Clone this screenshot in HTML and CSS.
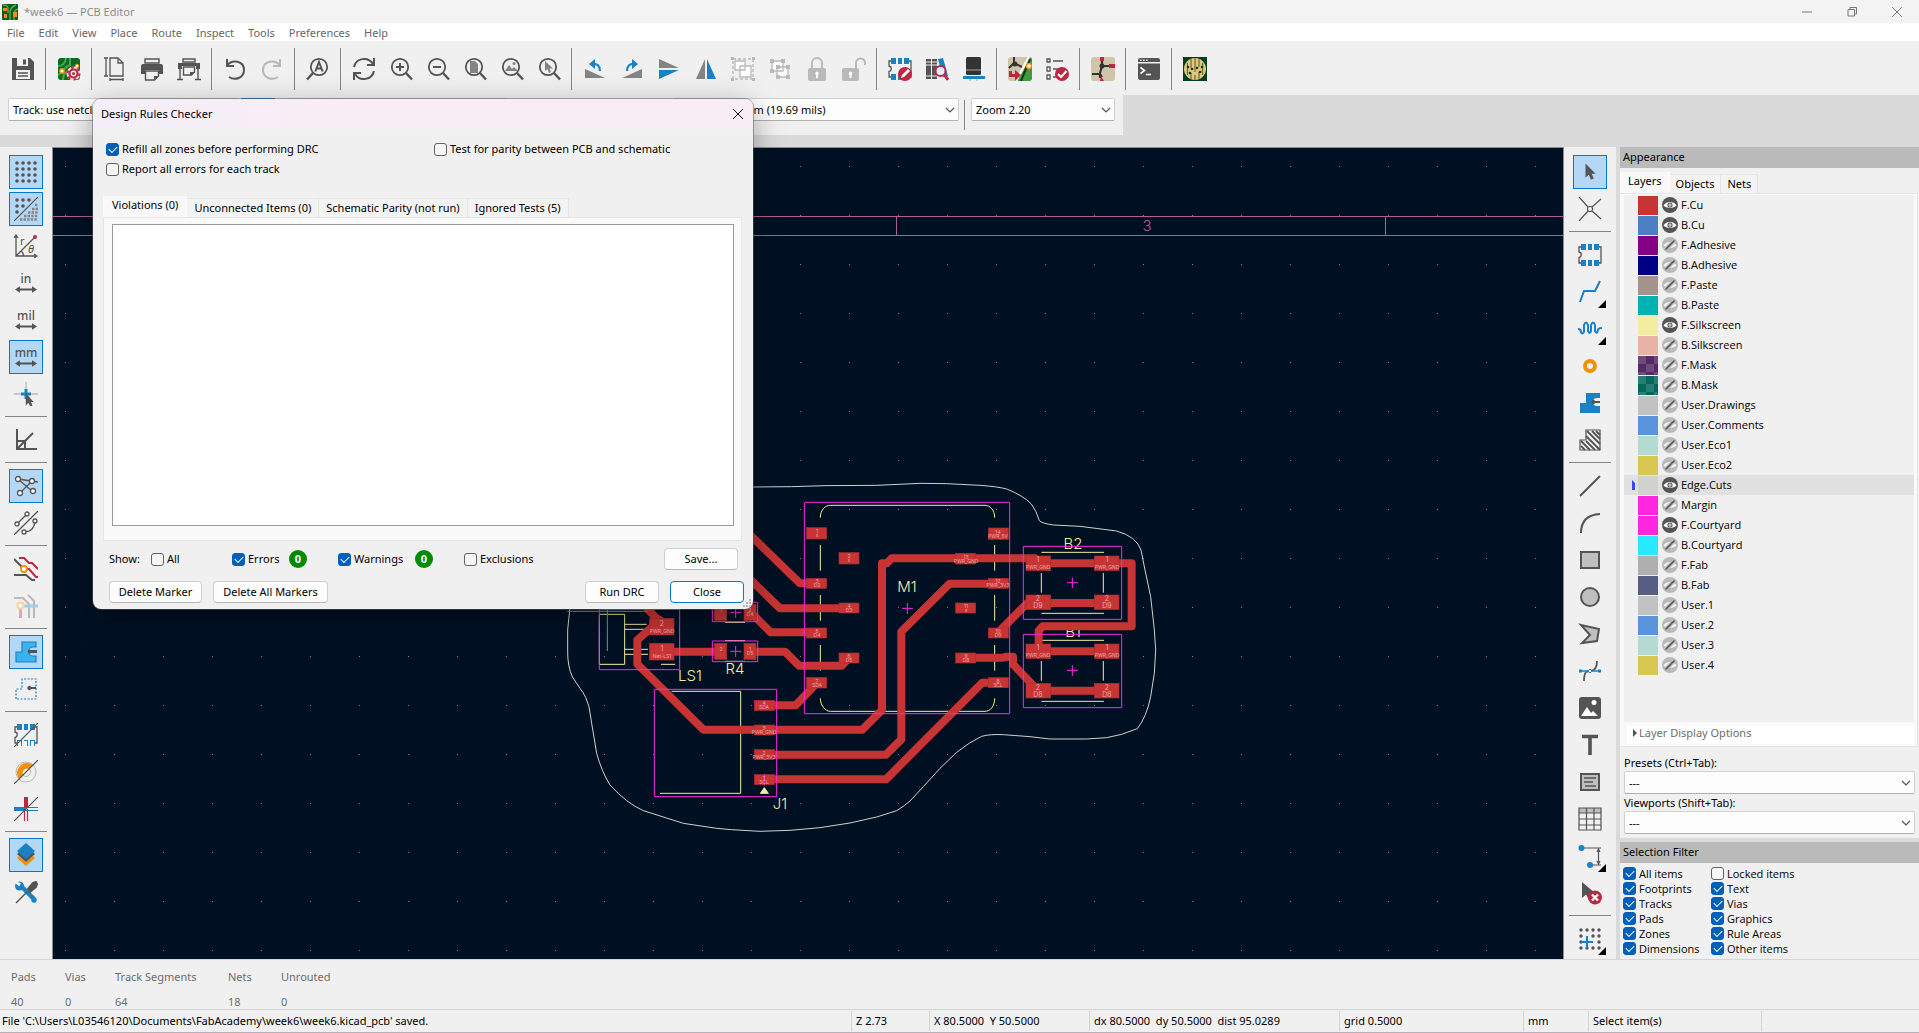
FILE: index.html
```
<!DOCTYPE html>
<html lang="en">
<head>
    <meta charset="UTF-8">
    <meta name="viewport" content="width=device-width, initial-scale=1.0">
    <title>*week6 — PCB Editor</title>
    <link rel="stylesheet" href="styles.css">
</head>
<body>
<!-- Shared symbols -->
<svg class="symbols" aria-hidden="true">
    <symbol id="i-chevron" viewBox="0 0 10 10"><path d="M1 3l4 4 4-4" fill="none" stroke="#555" stroke-width="1.2"/></symbol>
    <symbol id="i-lens" viewBox="0 0 24 24"><g fill="none" stroke="#545454" stroke-width="1.8"><circle cx="11" cy="10" r="8.2"/><path d="M17 16l6 6.500" stroke-width="2.400"/></g></symbol>
    <symbol id="i-arrow" viewBox="0 0 24 24"><path d="M7.500 3.500v14l3.300-2.800 2.200 5 2.800-1.200-2.200-4.800h4z" fill="#545454"/></symbol>
    <symbol id="i-width" viewBox="0 0 24 24"><path d="M1 18.500l5-3.200v2.200h12v-2.200l5 3.200-5 3.200v-2.200H6v2.200z" fill="#545454"/></symbol>
    <symbol id="i-eye" viewBox="0 0 16 16"><circle cx="8" cy="8" r="8" fill="#545454"/><path d="M1.500 8.300C4 3.800 12 3.800 14.500 8.300 12 12 4 12 1.500 8.300z" fill="#fff"/><circle cx="8" cy="8" r="2.600" fill="#545454"/><circle cx="8" cy="8" r="1.500" fill="#fff"/><circle cx="8" cy="8" r=".7" fill="#545454"/></symbol>
    <symbol id="i-hidden" viewBox="0 0 16 16"><circle cx="8" cy="8" r="8" fill="#b9b9b9"/><path d="M1.500 8.300C4 3.800 12 3.800 14.500 8.300 12 12 4 12 1.500 8.300z" fill="#f5f5f5"/><path d="M3.500 12.500l9-9" stroke="#b9b9b9" stroke-width="4"/><path d="M3.500 12.500l9-9" stroke="#545454" stroke-width="1.500"/></symbol>
    <symbol id="i-chip" viewBox="0 0 24 24"><path d="M3 4H1v5c3 .5 3 5 0 5.500V20h2M21 4h2v16h-2" fill="none" stroke="#545454" stroke-width="1.300"/><path d="M3 1h5v6H3zM10 1h4v6h-4zM16 1h5v6h-5zM3 17h5v6H3zM10 17h4v6h-4zM16 17h5v6h-5z" fill="#1a81c4"/></symbol>
    <symbol id="i-zone" viewBox="0 0 24 24"><path d="M2 22V12h6V2h14v5h-3a4 4 0 0 0 0 8h3v7z" fill="#1a81c4"/><path d="M22 10h-5a2 2 0 1 0 0 2h5z" fill="#545454"/></symbol>
</svg>

<header class="titlebar">
    <svg class="app-icon" viewBox="0 0 16 16"><rect width="16" height="16" rx="1" fill="#0f5c1c"/><path d="M8 16V9q0-6 6-8M12 16v-5q0-5 4-6M1 1q5 0 5 4v4" fill="none" stroke="#4fae4a" stroke-width="1.500"/><path d="M1 4h4v3H1zM11 8h4v5h-4zM2 10h3v4H2z" fill="#f08c1e"/></svg>
    <span class="title">*week6 — PCB Editor</span>
    <div class="window-buttons">
        <button aria-label="Minimize"><svg viewBox="0 0 12 12"><path d="M1 6h10"/></svg></button>
        <button aria-label="Restore"><svg viewBox="0 0 12 12"><path d="M2 3.500h6.500V10H2zM4 3.500V1.500h6.500V8h-2"/></svg></button>
        <button aria-label="Close"><svg viewBox="0 0 12 12"><path d="M1 1l10 10M11 1L1 11"/></svg></button>
    </div>
</header>

<nav class="menu">
    <a href="#">File</a><a href="#">Edit</a><a href="#">View</a><a href="#">Place</a><a href="#">Route</a><a href="#">Inspect</a><a href="#">Tools</a><a href="#">Preferences</a><a href="#">Help</a>
</nav>

<div class="toolbar">
    <button aria-label="Save"><svg viewBox="0 0 24 24"><path d="M1 1h18l4 4v18H1z" fill="#545454"/><path d="M6 1h11v8H6z" fill="#f0f0f0"/><path d="M12 2.500h3v5h-3z" fill="#545454"/><path d="M5 13h14v9H5z" fill="#f0f0f0"/><path d="M7 16h10M7 19h10" stroke="#545454" stroke-width="1.300"/></svg></button>
    <span class="sep"></span>
    <button aria-label="Board setup"><svg viewBox="0 0 24 24"><rect x="1" y="1" width="22" height="22" rx="3" fill="#0b6b1e"/><path d="M1 9q7 0 8-8M1 18c6-2 5-8 12-10V1M6 23c0-7 3-8 8-10" fill="none" stroke="#49a64d" stroke-width="2"/><circle cx="5" cy="14" r="2.200" fill="#fff" stroke="#f29100" stroke-width="1.400"/><circle cx="20" cy="9" r="1.800" fill="#fff" stroke="#f29100"/><circle cx="16.500" cy="16.500" r="4.500" fill="none" stroke="#f4d8dd" stroke-width="5"/><circle cx="16.500" cy="16.500" r="4" fill="#f0f0f0" stroke="#bf2641" stroke-width="2.200"/><circle cx="16.500" cy="16.500" r="6" fill="none" stroke="#bf2641" stroke-width="2" stroke-dasharray="2.700 3.580"/><circle cx="16.500" cy="16.500" r="1.500" fill="#bf2641"/></svg></button>
    <span class="sep"></span>
    <button aria-label="Page settings"><svg viewBox="0 0 24 24"><g fill="none" stroke="#545454" stroke-width="1.300"><path d="M7 1h8l5 5v13H7z"/><path d="M15 1v5h5"/><path d="M1 1h4M1 19h4M3 1v18M7 21v3M20 21v3M7 22.500h13"/></g></svg></button>
    <button aria-label="Print"><svg viewBox="0 0 24 24"><path d="M5 2h14v4H5z" fill="none" stroke="#545454" stroke-width="1.400"/><path d="M1 9q0-2 2-2h18q2 0 2 2v8h-4v-4H5v4H1z" fill="#545454"/><path d="M5.500 14h13v5l-4 4h-9z" fill="none" stroke="#545454" stroke-width="1.400"/><path d="M14 23v-4h5z" fill="#545454"/></svg></button>
    <button aria-label="Plot"><svg viewBox="0 0 24 24"><path d="M6 2h12v3H6z" fill="none" stroke="#545454" stroke-width="1.400"/><path d="M1 6h22v6h-4V9H5v3H1z" fill="#545454"/><path d="M6.500 10h11v5l-3 3h-8z" fill="none" stroke="#545454" stroke-width="1.400"/><path d="M3 12v10M21 12v10M0 22.500h6M18 22.500h6" stroke="#545454" stroke-width="1.400"/><path d="M13 19v-4h5z" fill="#545454"/></svg></button>
    <span class="sep"></span>
    <button aria-label="Undo"><svg viewBox="0 0 24 24"><path d="M4 2v7h7M4 8.500C9 2 21 3.500 21 13c0 8-9 11-15 7" fill="none" stroke="#545454" stroke-width="2"/></svg></button>
    <button aria-label="Redo"><svg viewBox="0 0 24 24"><path d="M20 2v7h-7M20 8.500C15 2 3 3.500 3 13c0 8 9 11 15 7" fill="none" stroke="#b9b9b9" stroke-width="2"/></svg></button>
    <span class="sep"></span>
    <button aria-label="Find"><svg viewBox="0 0 24 24"><g fill="none" stroke="#545454" stroke-width="1.800"><circle cx="13" cy="10" r="8.200"/><path d="M7 16l-6 6.500" stroke-width="2.400"/><path d="M9.300 14.500l3.700-9.500 3.700 9.500M10.500 11.500h5" stroke-width="2"/></g></svg></button>
    <span class="sep"></span>
    <button aria-label="Refresh"><svg viewBox="0 0 24 24"><path d="M2 10C4 1 16-1 21 7M22 1v7h-7M22 14c-2 9-14 11-19 3M2 23v-7h7" fill="none" stroke="#545454" stroke-width="2"/></svg></button>
    <button aria-label="Zoom in"><svg viewBox="0 0 24 24"><use href="#i-lens"/><path d="M11 6v8M7 10h8" stroke="#545454" stroke-width="2"/></svg></button>
    <button aria-label="Zoom out"><svg viewBox="0 0 24 24"><use href="#i-lens"/><path d="M7 10h8" stroke="#545454" stroke-width="2"/></svg></button>
    <button aria-label="Zoom to fit"><svg viewBox="0 0 24 24"><use href="#i-lens"/><path d="M7 4h5l3 3v9H7z" fill="#848484"/></svg></button>
    <button aria-label="Zoom to objects"><svg viewBox="0 0 24 24"><use href="#i-lens"/><path d="M5 14l4-6 3 4 2-2 4 4z" fill="#848484"/><circle cx="14" cy="6.500" r="1.500" fill="#848484"/></svg></button>
    <button aria-label="Zoom to selection"><svg viewBox="0 0 24 24"><use href="#i-lens"/><path d="M8 4v10l2.400-2 1.600 4 2-1-1.600-3.500H16z" fill="#848484"/></svg></button>
    <span class="sep"></span>
    <button aria-label="Rotate counterclockwise"><svg viewBox="0 0 24 24"><path d="M2 12v9h20z" fill="#848484"/><path d="M9 7q8-1 8 7" fill="none" stroke="#1a81c4" stroke-width="2.200"/><path d="M12 2L6 7l6 5z" fill="#1a81c4"/></svg></button>
    <button aria-label="Rotate clockwise"><svg viewBox="0 0 24 24"><path d="M22 12v9H2z" fill="#848484"/><path d="M15 7q-8-1-8 7" fill="none" stroke="#1a81c4" stroke-width="2.200"/><path d="M12 2l6 5-6 5z" fill="#1a81c4"/></svg></button>
    <button aria-label="Flip vertically"><svg viewBox="0 0 24 24"><path d="M2 2l20 9H2z" fill="#848484"/><path d="M2 22l20-9H2z" fill="#1a81c4"/></svg></button>
    <button aria-label="Flip horizontally"><svg viewBox="0 0 24 24"><path d="M2 22L11 2v20z" fill="#848484"/><path d="M22 22L13 2v20z" fill="#1a81c4"/></svg></button>
    <button aria-label="Group"><svg viewBox="0 0 24 24"><path d="M2 2h20v20H2z" fill="none" stroke="#b9b9b9" stroke-width="1.400" stroke-dasharray="3 2"/><path d="M0 0h3v3H0zM21 0h3v3h-3zM0 21h3v3H0zM21 21h3v3h-3z" fill="#b9b9b9"/><path d="M4 4h10v9H4zM9 9h11v11H9z" fill="#fff" stroke="#b9b9b9" stroke-width="1.300"/></svg></button>
    <button aria-label="Ungroup"><svg viewBox="0 0 24 24"><path d="M4 4h11v10H4zM9 10h11v10H9z" fill="#fff" stroke="#b9b9b9" stroke-width="1.300"/><path d="M2 2h4v4H2zM13 2h4v4h-4zM2 12h4v4H2zM8 8h4v4H8zM18 8h4v4h-4zM8 18h4v4H8zM18 18h4v4h-4z" fill="#b9b9b9"/></svg></button>
    <button aria-label="Lock"><svg viewBox="0 0 24 24"><path d="M7 12V6a5 5 0 0 1 10 0v6" fill="none" stroke="#b9b9b9" stroke-width="2"/><rect x="3" y="11" width="18" height="13" rx="2" fill="#b9b9b9"/><path d="M12 14.500a2 2 0 0 1 1 3.500v3h-2v-3a2 2 0 0 1 1-3.500z" fill="#fff"/></svg></button>
    <button aria-label="Unlock"><svg viewBox="0 0 24 24"><path d="M14 12V6a4.500 4.500 0 0 1 9 0v2" fill="none" stroke="#b9b9b9" stroke-width="2"/><rect x="0" y="11" width="17" height="13" rx="2" fill="#b9b9b9"/><path d="M8.500 14.500a2 2 0 0 1 1 3.500v3h-2v-3a2 2 0 0 1 1-3.500z" fill="#fff"/></svg></button>
    <span class="sep"></span>
    <button aria-label="Footprint editor"><svg viewBox="0 0 24 24"><use href="#i-chip"/><circle cx="17" cy="17" r="7" fill="#bf2641"/><path d="M13 21l1-3 6-6 2 2-6 6z" fill="#fff"/></svg></button>
    <button aria-label="Footprint libraries"><svg viewBox="0 0 24 24"><path d="M1 2h5v20H1zM7 2h5v20H7z" fill="#545454"/><path d="M1 5h5M1 8h5M7 5h5M7 8h5M1 19h11" stroke="#f0f0f0"/><path d="M13 2l5-1 5 18-5 1z" fill="#1a81c4"/><path d="M19 17l4 6" stroke="#bf2641" stroke-width="3"/><circle cx="15.500" cy="14" r="5" fill="#dff0fa" stroke="#bf2641" stroke-width="2"/></svg></button>
    <button aria-label="3D viewer"><svg viewBox="0 0 24 24"><rect x="4" y="0" width="15" height="18" rx="1.500" fill="#333"/><path d="M4 13h15" stroke="#848484" stroke-width="1.400"/><path d="M1 19h22v3H1z" fill="#1a81c4"/><path d="M8 22v2M15 22v2" stroke="#b9b9b9" stroke-width="1.300"/></svg></button>
    <span class="sep"></span>
    <button aria-label="Update from schematic"><svg viewBox="0 0 24 24"><rect width="24" height="24" rx="3" fill="#d0c4aa"/><path d="M21 0q3 0 3 3v18q0 3-3 3H8z" fill="#3f9a40"/><path d="M21 0L8 24" stroke="#fff" stroke-width="2.500"/><path d="M22 2l-9 22" stroke="#083c10" stroke-width="2"/><path d="M6 0v6l8 4M6 6l-5 5" fill="none" stroke="#333" stroke-width="2"/><circle cx="7" cy="7" r="2.500" fill="#333"/><circle cx="21" cy="9" r="2.500" fill="#fff" stroke="#f29100" stroke-width="1.500"/><path d="M1 14v6h6v4l6-6-6-5v4H4v-3z" fill="#bf2641"/></svg></button>
    <button aria-label="Run DRC"><svg viewBox="0 0 24 24"><path d="M2 2h3v3H2zM2 10h3v4H2zM2 18h3v4H2z" fill="#fff" stroke="#545454" stroke-width="1.300"/><path d="M8 4h10M8 12h8M8 20h3" stroke="#545454" stroke-width="1.400"/><circle cx="17" cy="17" r="7" fill="#bf2641"/><path d="M13 17l3 3 5.500-6" fill="none" stroke="#fff" stroke-width="2"/></svg></button>
    <span class="sep"></span>
    <button aria-label="Schematic editor"><svg viewBox="0 0 24 24"><rect width="24" height="24" rx="3" fill="#d0c4aa"/><path d="M11 4v5h7M11 9l-2 7M1 17h8l2 3M9 16v5" fill="none" stroke="#333" stroke-width="2.200"/><path d="M9 0h4v4H9zM18 7h6v4h-6zM10 19l3 5H9z" fill="#bf2641"/><circle cx="11" cy="9" r="2.500" fill="#333"/></svg></button>
    <span class="sep"></span>
    <button aria-label="Scripting console"><svg viewBox="0 0 24 24"><path d="M1 3q0-2 2-2h18q2 0 2 2v2H1zM1 6.500h22V21q0 2-2 2H3q-2 0-2-2z" fill="#545454"/><path d="M3 3.300h1.500M6 3.300h1.500M9 3.300h1.500" stroke="#fff" stroke-width="1.500"/><path d="M3.500 10.500l4 3-4 3M9 17.500h5" fill="none" stroke="#fff" stroke-width="1.600"/></svg></button>
    <span class="sep"></span>
    <button aria-label="Plugin"><svg viewBox="0 0 24 24"><path d="M0 0h24v24H0z" fill="#053d20"/><ellipse cx="12" cy="12" rx="11" ry="11" fill="#e3c77d"/><path d="M8 2v9M12 1v14M16 2v8M8 16v6M16 15v7M12 18v5M4.500 6v12M19.500 6v12" stroke="#6e6a35" stroke-width="1.200"/><g fill="#053d20"><circle cx="5" cy="10" r="1.300"/><circle cx="9" cy="12" r="1.300"/><circle cx="14" cy="11" r="1.300"/><circle cx="19" cy="10" r="1.300"/><circle cx="7" cy="16" r="1.300"/><circle cx="17" cy="15" r="1.300"/></g></svg></button>
</div>

<div class="aux-row">
    <div class="aux-toolbar">
        <span class="select track-width"><select aria-label="Track width"><option>Track: use netclass width</option></select><svg><use href="#i-chevron"/></svg></span>
        <button class="auto-width" aria-label="Use existing track width"></button>
        <span class="select via-size"><select aria-label="Via size"><option>Via: use netclass sizes</option></select><svg><use href="#i-chevron"/></svg></span>
        <span class="select grid-size"><select aria-label="Grid"><option>Grid: 0.5000 mm (19.69 mils)</option></select><svg><use href="#i-chevron"/></svg></span>
        <span class="aux-sep"></span>
        <span class="select zoom-level"><select aria-label="Zoom"><option>Zoom 2.20</option></select><svg><use href="#i-chevron"/></svg></span>
    </div>
</div>

<main>
    <div class="side-tools">
        <button class="on" aria-label="Show grid"><svg viewBox="0 0 24 24"><path d="M3 3h0M9 3h0M15 3h0M21 3h0M3 9h0M9 9h0M15 9h0M21 9h0M3 15h0M9 15h0M15 15h0M21 15h0M3 21h0M9 21h0M15 21h0M21 21h0" stroke="#545454" stroke-width="3.600" stroke-linecap="round"/></svg></button>
        <button class="on" aria-label="Grid overrides"><svg viewBox="0 0 24 24"><path d="M3 3h0M9 3h0M15 3h0M3 9h0M9 9h0M3 15h0" stroke="#545454" stroke-width="3.600" stroke-linecap="round"/><path d="M0 24L24 0" stroke="#545454" stroke-width="1.200"/><path d="M21 8h3M18 12h6M14 15.500h10M10 19h14M6 22.500h18" stroke="#848484" stroke-width="2.400" stroke-dasharray="2.400 1.200"/></svg></button>
        <button aria-label="Polar coordinates"><svg viewBox="0 0 24 24"><path d="M2 1v21h21M2 22L20 4M0 4l2-3 2 3M20 20l3 2-3 2M7 17q3 2 2 5" fill="none" stroke="#545454" stroke-width="1.300"/><circle cx="21" cy="3" r="2" fill="#bf2641"/><text x="6" y="11" class="glyph">r</text><text x="14" y="19" class="glyph theta">θ</text></svg></button>
        <button aria-label="Inches"><svg viewBox="0 0 24 24"><use href="#i-width"/><text x="12" y="12" class="unit">in</text></svg></button>
        <button aria-label="Mils"><svg viewBox="0 0 24 24"><use href="#i-width"/><text x="12" y="12" class="unit">mil</text></svg></button>
        <button class="on" aria-label="Millimeters"><svg viewBox="0 0 24 24"><use href="#i-width"/><text x="12" y="12" class="unit">mm</text></svg></button>
        <button aria-label="Full-window crosshair"><svg viewBox="0 0 24 24"><path d="M12 0v24M0 12h24" stroke="#b9b9b9" stroke-width="1.300"/><path d="M12 7v10M7 12h10" stroke="#1a81c4" stroke-width="3"/><path d="M12 11v12l2.500-2 1.800 3.500 2.200-1-1.500-3.500h2.500z" fill="#545454"/></svg></button>
        <span class="sep"></span>
        <button aria-label="Limit to 45 degrees"><svg viewBox="0 0 24 24"><path d="M3 1v20h20M3 21L19 5M3 13h8v8" fill="none" stroke="#545454" stroke-width="2"/></svg></button>
        <span class="sep"></span>
        <button class="on" aria-label="Show ratsnest"><svg viewBox="0 0 24 24"><path d="M4 5l15 13M18 7L6 19M4 5l20 3" stroke="#545454" stroke-width="1.300"/><g fill="#fff" stroke="#545454" stroke-width="1.300"><circle cx="4" cy="5" r="2.500"/><circle cx="18" cy="7" r="2.500"/><circle cx="6" cy="19" r="2.500"/><circle cx="19" cy="17" r="2.500"/></g></svg></button>
        <button aria-label="Curved ratsnest"><svg viewBox="0 0 24 24"><path d="M0 24L24 0M3 13L13 3M10 21q10 0 11-11" fill="none" stroke="#545454" stroke-width="1.300"/><g fill="#fff" stroke="#545454" stroke-width="1.300"><circle cx="3" cy="13" r="2"/><circle cx="13" cy="3" r="2"/><circle cx="10" cy="21" r="2"/><circle cx="21" cy="10" r="2"/></g></svg></button>
        <span class="sep"></span>
        <button aria-label="Inactive layer display"><svg viewBox="0 0 24 24"><g fill="none" stroke-width="2"><path d="M0 2l6 6 4 4" stroke="#545454"/><path d="M10 12h5l7 8h2" stroke="#bf2641"/><path d="M5 1h5l5 5h3l6 6" stroke="#bf2641"/><path d="M0 18h12l6 5h3" stroke="#545454"/></g><circle cx="10" cy="12" r="3" fill="#fff" stroke="#f29100" stroke-width="1.800"/></svg></button>
        <button aria-label="Highlight net"><svg viewBox="0 0 24 24"><path d="M0 4h9l6 6v14M14 1l6 6v17" fill="none" stroke="#b9b9b9" stroke-width="2"/><path d="M7 12h17" stroke="#a3cde8" stroke-width="3"/><path d="M6.500 14v10" stroke="#e3a4b0" stroke-width="3"/><circle cx="6.500" cy="11.500" r="3" fill="#fff" stroke="#fad399" stroke-width="2"/></svg></button>
        <span class="sep"></span>
        <button class="on" aria-label="Filled zones"><svg viewBox="0 0 24 24"><path d="M2 22V12h6V2h14v5h-3a4 4 0 0 0 0 9h3v6z" fill="#39b4ea" stroke="#1a81c4" stroke-width="1.200"/><path d="M23 10h-6a2 2 0 1 0 0 3h6z" fill="#545454"/></svg></button>
        <button aria-label="Zone outlines"><svg viewBox="0 0 24 24"><path d="M2 22V12h6V2h14v20z" fill="none" stroke="#1a81c4" stroke-width="1.200" stroke-dasharray="2 1.500"/><path d="M22 10h-5a2 2 0 1 0 0 2h5z" fill="#545454"/></svg></button>
        <span class="sep"></span>
        <button aria-label="Sketch footprints"><svg viewBox="0 0 24 24"><use href="#i-chip"/><path d="M4 18h3v5H4zM10 18h3v5h-3zM17 18h3v5h-3z" fill="#fff"/><path d="M0 24L24 0" stroke="#545454" stroke-width="1.200"/></svg></button>
        <button aria-label="Sketch vias"><svg viewBox="0 0 24 24"><circle cx="12" cy="12" r="10" fill="none" stroke="#b9b9b9"/><circle cx="12" cy="12" r="4.500" fill="none" stroke="#b9b9b9"/><path d="M5 19A10 10 0 0 1 19 5l-4 4a4.500 4.500 0 0 0-6 6z" fill="#f29100"/><path d="M0 24L24 0" stroke="#545454" stroke-width="1.200"/></svg></button>
        <button aria-label="Sketch tracks"><svg viewBox="0 0 24 24"><path d="M0 12h12" stroke="#1a81c4" stroke-width="4"/><path d="M12 10.500h12M12 13.500h12" stroke="#1a81c4" stroke-width="1.200"/><path d="M12 0v11" stroke="#bf2641" stroke-width="4"/><path d="M10.500 12v12M13.500 12v12" stroke="#bf2641" stroke-width="1.200"/><path d="M0 24L24 0" stroke="#545454" stroke-width="1.200"/></svg></button>
        <span class="sep"></span>
        <button class="on" aria-label="Appearance manager"><svg viewBox="0 0 24 24"><path d="M3 15l9 8 9-8-2-2-7 6-7-6z" fill="#f29100"/><path d="M3 11l9 8 9-8-2-2H5z" fill="#545454"/><path d="M12 0l9 8-9 8-9-8z" fill="#1a81c4"/></svg></button>
        <button aria-label="Properties manager"><svg viewBox="0 0 24 24"><path d="M5 4l15 15" stroke="#1a81c4" stroke-width="4.500"/><circle cx="5.500" cy="6" r="4.500" fill="#1a81c4"/><path d="M1 1l5 4" stroke="#f0f0f0" stroke-width="3"/><circle cx="20" cy="20" r="2.700" fill="#1a81c4"/><path d="M2 23L13 12" stroke="#545454" stroke-width="1.500"/><path d="M14 9l5-6 3-1 1 2-1 3-6 5z" fill="#545454" stroke="#545454" stroke-width="2" stroke-linejoin="round"/></svg></button>
    </div>

    <div class="canvas">
        <svg class="board" width="100%" height="100%">
            <defs>
                <pattern id="grid-dots" width="49" height="49" patternUnits="userSpaceOnUse"><path d="M12 19h1v1h-1z" fill="#7d858c"/></pattern>
            </defs>
            <rect width="100%" height="100%" fill="url(#grid-dots)"/>
            <!-- drawing sheet frame -->
            <g class="sheet">
                <rect x="0" y="69" width="100%" height="1"/>
                <rect x="0" y="88" width="100%" height="1"/>
                <rect x="843" y="69" width="1" height="19"/>
                <rect x="1332" y="69" width="1" height="19"/>
                <text x="1094" y="84" class="ref">3</text>
            </g>
            <!-- reference designators, under the copper -->
            <g class="ref">
                <text x="854" y="445">M1</text>
                <text x="1020" y="402">B2</text>
                <text x="1020" y="490">B1</text>
                <text x="637" y="534">LS1</text>
                <text x="682" y="527">R4</text>
                <text x="727" y="662">J1</text>
            </g>
            <g transform="translate(687 323) scale(.33333)">
                <g class="silk">
                    <path d="M-422 433h76v150h-76zM-346 463h66M-346 478h66M-346 538h70M-346 553h70M-237 583h42"/>
                    <path d="M-45 457h60M-45 512h60M-45 574h60"/>
                    <path d="M-205 664H2V970H-240"/>
                    <path d="M241 143C241 120 255 106 271 106H735C750 106 764 120 764 143M241 225v77M241 375v77M241 525v77M764 225v77M764 375v77M764 525v77M241 685C241 705 255 724 271 724H735C750 724 764 710 764 685"/>
                    <path d="M904 247h188M904 430h188M904 309v59M1090 309v59M904 511h188M904 694h188M904 573v59M1090 573v59"/>
                    <path d="M61 970l12-17 12 17z" fill="#f2eda1"/>
                </g>
                <g class="tracks">
                    <path d="M10 175L180 340H230M10 308L120 415H325M30 425L92 487H230M30 545H135L177 587H305L327 564M73 706H167L230 640"/>
                    <path d="M-275 420L-230 465M-240 450L-308 510V582L-110 779H367L426 720V280H440L455 265H885L900 280H1175V469H908L896 482V540"/>
                    <path d="M73 854H438L484 808V485L629 341H775M73 928H438L727 638H775M775 487L862 399H1100"/>
                    <path d="M677 563H790L800 560H819V583L895 662H1100M895 544H1100M-235 545H-60"/>
                </g>
                <g id="pads" class="pads"></g>
                <g class="courtyard">
                    <path d="M193 97h616v634H193zM850 229h295v219H850zM850 493h295v220H850zM-257 658H110v322H-257zM-422 418h241v181h-241zM-83 513H53v62H-83zM-83 397H53v58H-83z"/>
                    <path d="M486 415h33M502 399v33M981 338h33M997 322v33M981 601h33M997 585v33M-29 544h33M-13 528v33M-29 427h33M-13 411v33M73 912v34"/>
                </g>
                <path class="edge" d="M-60 53L40 51 155 50 255 47 410 46 540 40 620 41 720 46 Q775 50 800 57Q850 77 874 102L888 125 898 152Q905 160 940 165L1020 169 1130 183Q1190 200 1203 240L1215 300 1232 380 1243 480 1247 540 1243 610 1232 680Q1220 740 1192 776L1145 793 1100 803 1040 807H930L870 800 790 794Q750 792 725 799 690 815 650 847L600 895 550 950 510 993Q490 1010 470 1022L410 1041 330 1059 240 1073 150 1081 60 1084-25 1079-70 1075-170 1060-290 1022Q-340 1000-390 945-415 905-430 850L-445 760-453 710-463 682Q-470 668-480 655L-502 622Q-518 590-517 540V480L-510 410"/>
                <path class="cursor" d="M-518 424h240M-398 418v125"/>
            </g>
            <g id="pad-text" class="pad-text"></g>
        </svg>
    </div>

    <div class="side-tools">
        <button class="on" aria-label="Select"><svg viewBox="0 0 24 24"><use href="#i-arrow"/></svg></button>
        <button aria-label="Local ratsnest"><svg viewBox="0 0 24 24"><path d="M1 0l9 10M23 2l-9 8M1 24l9-10M23 22l-9-8" stroke="#545454" stroke-width="1.200"/><circle cx="12" cy="12" r="2.500" fill="#fff" stroke="#545454" stroke-width="1.200"/></svg></button>
        <span class="sep"></span>
        <button aria-label="Place footprint"><svg viewBox="0 0 24 24"><use href="#i-chip"/></svg></button>
        <button class="more" aria-label="Route tracks"><svg viewBox="0 0 24 24"><path d="M2 22l4-11h11l5-10" fill="none" stroke="#1a81c4" stroke-width="2"/></svg></button>
        <button class="more" aria-label="Tune length"><svg viewBox="0 0 24 24"><path d="M0 12q3 0 3 3 1 3 3 0V8q2-5 4 0v6q2 4 3 0V8q2-5 4 0v6q2 4 3-1 0-2 4-2" fill="none" stroke="#1a81c4" stroke-width="2"/></svg></button>
        <button aria-label="Place via"><svg viewBox="0 0 24 24"><circle cx="12" cy="12" r="5" fill="none" stroke="#f29100" stroke-width="4"/></svg></button>
        <button aria-label="Draw filled zone"><svg viewBox="0 0 24 24"><use href="#i-zone"/></svg></button>
        <button aria-label="Draw rule area"><svg viewBox="0 0 24 24"><path d="M2 22V12h6V2h14v20z" fill="none" stroke="#545454" stroke-width="1.200"/><path d="M3 13l9 9M3 18l4 4M8 8l14 14M8 13l9 9M9 3l13 13M14 3l8 8M18 3l4 4" stroke="#545454" stroke-width="1.800"/></svg></button>
        <span class="sep"></span>
        <button aria-label="Draw line"><svg viewBox="0 0 24 24"><path d="M2 22L22 2" stroke="#545454" stroke-width="2"/></svg></button>
        <button aria-label="Draw arc"><svg viewBox="0 0 24 24"><path d="M3 22Q3 4 22 3" fill="none" stroke="#545454" stroke-width="2"/></svg></button>
        <button aria-label="Draw rectangle"><svg viewBox="0 0 24 24"><path d="M3 4h18v16H3z" fill="#bfbfbf" stroke="#545454" stroke-width="2"/></svg></button>
        <button aria-label="Draw circle"><svg viewBox="0 0 24 24"><circle cx="12" cy="12" r="9" fill="#bfbfbf" stroke="#545454" stroke-width="2"/></svg></button>
        <button aria-label="Draw polygon"><svg viewBox="0 0 24 24"><path d="M3 3l18 4-2 12-15 2 8-8z" fill="#bfbfbf" stroke="#545454" stroke-width="2"/></svg></button>
        <button aria-label="Draw bezier"><svg viewBox="0 0 24 24"><path d="M6 22c0-10 3-10 6-10s7-1 7-10" fill="none" stroke="#545454" stroke-width="1.800"/><path d="M2 12h20" stroke="#1a81c4" stroke-width="1.500"/><path d="M1 10.500h3v3H1zM20 10.500h3v3h-3z" fill="#1a81c4"/><path d="M12 10l2 2-2 2-2-2z" fill="#fff" stroke="#1a81c4"/></svg></button>
        <button aria-label="Place image"><svg viewBox="0 0 24 24"><rect x="1" y="1" width="22" height="22" rx="3" fill="#545454"/><circle cx="16" cy="6.500" r="2.500" fill="#fff"/><path d="M3 20l6-9 4 6 2-2 5 5z" fill="#fff"/></svg></button>
        <button aria-label="Place text"><svg viewBox="0 0 24 24"><path d="M4 3.500h16M12 3v19" stroke="#545454" stroke-width="3.600"/></svg></button>
        <button aria-label="Place text box"><svg viewBox="0 0 24 24"><path d="M3 4h18v16H3z" fill="#bfbfbf" stroke="#545454" stroke-width="2"/><path d="M6 8h12M6 12h9M7 16h11" stroke="#545454" stroke-width="1.300"/></svg></button>
        <button aria-label="Place table"><svg viewBox="0 0 24 24"><path d="M1 1h22v5H1z" fill="#bfbfbf"/><path d="M1 1h22v22H1zM1 6h22M1 12h22M1 18h22M8.500 1v22M16 1v22" fill="none" stroke="#545454" stroke-width="1.200"/></svg></button>
        <button class="more" aria-label="Dimension"><svg viewBox="0 0 24 24"><path d="M3 4h20M12 21h11M20.500 6v13M19 8l1.500-3L22 8M19 17l1.500 3 1.500-3" fill="none" stroke="#545454" stroke-width="1.200"/><circle cx="3.500" cy="4" r="3" fill="#1a81c4"/><circle cx="12" cy="21" r="3" fill="#1a81c4"/></svg></button>
        <button aria-label="Delete"><svg viewBox="0 0 24 24"><path d="M4 1v16l4-3.500 3 5.500 3-2-2.500-5H17z" fill="#545454"/><circle cx="17" cy="16.500" r="7" fill="#bf2641"/><path d="M14 13.500l6 6M20 13.500l-6 6" stroke="#fff" stroke-width="2.400"/></svg></button>
        <span class="sep"></span>
        <button class="more" aria-label="Set grid origin"><svg viewBox="0 0 24 24"><path d="M3 3h0M9 3h0M15 3h0M21 3h0M3 9h0M15 9h0M21 9h0M3 15h0M21 15h0M3 21h0M9 21h0M15 21h0M21 21h0" stroke="#545454" stroke-width="3.400" stroke-linecap="round"/><path d="M9 9v12M3 15h12" stroke="#1a81c4" stroke-width="2"/></svg></button>
    </div>

    <aside class="panel">
        <h2>Appearance</h2>
        <div class="tabs">
            <button class="tab active">Layers</button><button class="tab">Objects</button><button class="tab">Nets</button>
        </div>
        <div class="tab-page">
            <ul id="layer-list" class="layer-list"></ul>
            <button class="display-options"><svg viewBox="0 0 6 8"><path d="M1 0l4 4-4 4z" fill="#545454"/></svg>Layer Display Options</button>
        </div>
        <div class="presets">
            <label for="presets">Presets (Ctrl+Tab):</label>
            <span class="select"><select id="presets"><option>---</option></select><svg><use href="#i-chevron"/></svg></span>
            <label for="viewports">Viewports (Shift+Tab):</label>
            <span class="select"><select id="viewports"><option>---</option></select><svg><use href="#i-chevron"/></svg></span>
        </div>
        <h2>Selection Filter</h2>
        <div class="filter">
            <label><input type="checkbox" checked>All items</label>
            <label><input type="checkbox">Locked items</label>
            <label><input type="checkbox" checked>Footprints</label>
            <label><input type="checkbox" checked>Text</label>
            <label><input type="checkbox" checked>Tracks</label>
            <label><input type="checkbox" checked>Vias</label>
            <label><input type="checkbox" checked>Pads</label>
            <label><input type="checkbox" checked>Graphics</label>
            <label><input type="checkbox" checked>Zones</label>
            <label><input type="checkbox" checked>Rule Areas</label>
            <label><input type="checkbox" checked>Dimensions</label>
            <label><input type="checkbox" checked>Other items</label>
        </div>
    </aside>
</main>

<dl class="board-info">
    <div class="w-pads"><dt>Pads</dt><dd>40</dd></div>
    <div class="w-vias"><dt>Vias</dt><dd>0</dd></div>
    <div class="w-tracks"><dt>Track Segments</dt><dd>64</dd></div>
    <div class="w-nets"><dt>Nets</dt><dd>18</dd></div>
    <div><dt>Unrouted</dt><dd>0</dd></div>
</dl>

<footer class="status">
    <span class="message">File 'C:\Users\L03546120\Documents\FabAcademy\week6\week6.kicad_pcb' saved.</span>
    <span class="s-zoom">Z 2.73</span>
    <span class="s-pos">X 80.5000&nbsp; Y 50.5000</span>
    <span class="s-delta">dx 80.5000&nbsp; dy 50.5000&nbsp; dist 95.0289</span>
    <span class="s-grid">grid 0.5000</span>
    <span class="s-unit">mm</span>
    <span class="s-tool">Select item(s)</span>
    <span class="s-rest"></span>
</footer>

<!-- Design Rules Checker -->
<section class="dialog">
    <div class="dialog-title">
        <span>Design Rules Checker</span>
        <button aria-label="Close dialog"><svg viewBox="0 0 12 12"><path d="M1 1l10 10M11 1L1 11"/></svg></button>
    </div>
    <div class="dialog-body">
        <div class="options">
            <label><input type="checkbox" checked>Refill all zones before performing DRC</label>
            <label><input type="checkbox">Test for parity between PCB and schematic</label>
            <label><input type="checkbox">Report all errors for each track</label>
        </div>
        <div class="tabs">
            <button class="tab active">Violations (0)</button><button class="tab">Unconnected Items (0)</button><button class="tab">Schematic Parity (not run)</button><button class="tab">Ignored Tests (5)</button>
        </div>
        <div class="results"><div class="results-list"></div></div>
        <div class="show-row">
            <span class="show-label">Show:</span>
            <label class="c-all"><input type="checkbox">All</label>
            <label class="c-errors"><input type="checkbox" checked>Errors</label>
            <span class="badge">0</span>
            <label class="c-warnings"><input type="checkbox" checked>Warnings</label>
            <span class="badge">0</span>
            <label class="c-exclusions"><input type="checkbox">Exclusions</label>
            <button class="btn">Save...</button>
        </div>
        <div class="buttons">
            <button class="btn wide">Delete Marker</button>
            <button class="btn wider">Delete All Markers</button>
            <button class="btn run">Run DRC</button>
            <button class="btn default">Close</button>
        </div>
    </div>
    <svg class="grip" viewBox="0 0 8 8"><path d="M6 0h2v2H6zM3 3h2v2H3zM6 3h2v2H6zM0 6h2v2H0zM3 6h2v2H3zM6 6h2v2H6z" fill="#b9b9b9"/></svg>
</section>

<script>
const layers = [
    {name: "F.Cu", color: "#c83434", visible: true},
    {name: "B.Cu", color: "#4d7fc4", visible: true},
    {name: "F.Adhesive", color: "#840084"},
    {name: "B.Adhesive", color: "#000084"},
    {name: "F.Paste", color: "#a4948c"},
    {name: "B.Paste", color: "#00b2b2"},
    {name: "F.Silkscreen", color: "#f2eda1", visible: true},
    {name: "B.Silkscreen", color: "#e8b2a7"},
    {name: "F.Mask", color: "#562a66", checked: true},
    {name: "B.Mask", color: "#02675b", checked: true},
    {name: "User.Drawings", color: "#c2c2c2"},
    {name: "User.Comments", color: "#5994dc"},
    {name: "User.Eco1", color: "#b4dbd2"},
    {name: "User.Eco2", color: "#d8c852"},
    {name: "Edge.Cuts", color: "#d0d2cd", visible: true, active: true},
    {name: "Margin", color: "#ff26e2"},
    {name: "F.Courtyard", color: "#ff26e2", visible: true},
    {name: "B.Courtyard", color: "#26e9ff"},
    {name: "F.Fab", color: "#afafaf"},
    {name: "B.Fab", color: "#585d84"},
    {name: "User.1", color: "#c2c2c2"},
    {name: "User.2", color: "#5994dc"},
    {name: "User.3", color: "#b4dbd2"},
    {name: "User.4", color: "#d8c852"}
];

document.getElementById("layer-list").innerHTML = layers.map(l => `
    <li class="${l.active ? 'active' : ''}">
        <span class="swatch ${l.checked ? 'checked' : ''}" style="background-color: ${l.color}"></span>
        <button aria-label="Toggle ${l.name}"><svg><use href="#${l.visible ? 'i-eye' : 'i-hidden'}"/></svg></button>
        <span>${l.name}</span>
    </li>
`).join('');

// x, y, width, height, number, net
const pads = [
    [230, 190, 60, 34, "1", "x"], [327, 265, 60, 34, "2", "x"], [230, 340, 60, 30, "3", "D2"],
    [327, 414, 60, 30, "4", "D3"], [230, 489, 60, 30, "5", "D4"], [327, 564, 60, 30, "6", "D5"],
    [230, 638, 60, 32, "7", "SDA"], [775, 191, 60, 34, "14", "PWR_5V"], [677, 266, 60, 32, "13", "PWR_GND"],
    [775, 340, 60, 30, "12", "PWR_3V3"], [677, 414, 60, 30, "11", "x"], [775, 489, 60, 30, "10", "D9"],
    [677, 564, 60, 30, "9", "D8"], [775, 638, 60, 30, "8", "SCL"],
    [895, 280, 74, 44, "1", "PWR_GND"], [1100, 280, 74, 44, "1", "PWR_GND"],
    [895, 397, 74, 44, "2", "D9"], [1100, 397, 74, 44, "2", "D9"],
    [895, 544, 74, 44, "1", "PWR_GND"], [1100, 544, 74, 44, "1", "PWR_GND"],
    [895, 662, 74, 44, "2", "D8"], [1100, 662, 74, 44, "2", "D8"],
    [73, 706, 60, 30, "4", "SDA"], [73, 780, 60, 30, "3", "PWR_GND"],
    [73, 854, 60, 30, "2", "PWR_3V3"], [73, 929, 60, 30, "1", "SCL"],
    [-235, 470, 74, 50, "2", "PWR_GND"], [-235, 545, 74, 50, "1", "Net-LS1"],
    [-58, 544, 36, 48, "2", ""], [30, 544, 36, 48, "1", "D5"],
    [-58, 427, 36, 48, "1", ""], [30, 427, 36, 48, "2", "D4"]
];

document.getElementById("pads").innerHTML = pads.map(([x, y, w, h]) =>
    `<rect x="${x - w / 2}" y="${y - h / 2}" width="${w}" height="${h}"/>`
).join('');

document.getElementById("pad-text").innerHTML = pads.map(([x, y, w, h, num, net]) => {
    const cx = Math.round(687 + x / 3);
    const cy = Math.round(323 + y / 3);
    const big = w > 70;
    return `<text x="${cx}" y="${cy - (big ? 1 : 0)}" class="${big ? 'big' : ''}">${num}</text>
        <text x="${cx}" y="${cy + (big ? 6 : 4)}" class="${big && net.length < 3 ? 'big' : ''}">${net}</text>`;
}).join('');
</script>
</body>
</html>
```
FILE: styles.css
```
* {
    box-sizing: border-box;
}
body {
    margin: 0;
    height: 100vh;
    display: flex;
    flex-direction: column;
    overflow: hidden;
    font-family: "Noto Sans", "Open Sans", sans-serif;
    font-size: 11px;
    line-height: 16px;
    color: #000;
    background: #f0f0f0;
}
button, select, input {
    font: inherit;
    color: inherit;
    margin: 0;
}
button {
    padding: 0;
    border: none;
    background: none;
}
.symbols {
    position: absolute;
    width: 0;
    height: 0;
}

/* Title bar and menu */
.titlebar {
    height: 23px;
    display: flex;
    align-items: center;
    background: #f3f3f3;
    color: #8e8e8e;
}
.app-icon {
    width: 16px;
    height: 16px;
    margin: 0 6px 0 2px;
}
.window-buttons {
    margin-left: auto;
    display: flex;
}
.window-buttons button {
    width: 45px;
    height: 20px;
}
.window-buttons svg, .dialog-title svg {
    width: 12px;
    height: 12px;
    display: block;
    margin: 0 auto;
    fill: none;
    stroke: #777;
}
.menu {
    height: 18px;
    display: flex;
    align-items: flex-end;
    background: #fff;
}
.menu a {
    padding: 0 7px;
    color: #666;
    text-decoration: none;
}

/* Main toolbar */
.toolbar {
    height: 54px;
    display: flex;
    align-items: center;
    padding: 1px 0 0 4px;
}
.toolbar button {
    width: 37px;
    height: 37px;
    flex: none;
}
.toolbar svg, .side-tools svg {
    width: 24px;
    height: 24px;
    display: block;
    margin: 0 auto;
}
.toolbar .sep {
    width: 1px;
    height: 42px;
    margin: 0 4px;
    background: #858585;
}
.aux-row {
    height: 52px;
    padding-bottom: 12px;
    background: #dadada;
}
.aux-toolbar {
    width: 1123px;
    height: 40px;
    display: flex;
    align-items: flex-start;
    padding: 3px 8px;
    background: #f0f0f0;
}
.select {
    display: grid;
    align-items: center;
}
.select select {
    grid-area: 1 / 1;
    appearance: none;
    height: 23px;
    width: 100%;
    padding: 0 4px;
    border: 1px solid #d0d0d0;
    border-bottom-color: #b0b0b0;
    border-radius: 2px;
    background: #fdfdfd;
}
.select svg {
    grid-area: 1 / 1;
    justify-self: end;
    width: 10px;
    height: 10px;
    margin-right: 4px;
    pointer-events: none;
}
.track-width {
    width: 230px;
}
.auto-width {
    width: 34px;
    height: 34px;
    margin: 0 12px 0 3px;
    border: 1px solid #0078d4;
    background: #b3d7f5;
}
.via-size {
    width: 220px;
}
.grid-size {
    width: 286px;
    margin-left: auto;
}
.aux-sep {
    width: 1px;
    height: 30px;
    margin: 2px 6px 0 5px;
    background: #858585;
}
.zoom-level {
    width: 144px;
}

/* Work area */
main {
    flex: 1;
    min-height: 0;
    display: flex;
}
.side-tools {
    width: 52px;
    padding-top: 8px;
    display: flex;
    flex-direction: column;
    align-items: center;
    gap: 3px;
    flex: none;
}
.side-tools button {
    width: 34px;
    height: 34px;
    flex: none;
    border: 1px solid transparent;
}
.side-tools .on {
    border-color: #0078d4;
    background: #b3d7f5;
}
.side-tools .sep {
    width: 42px;
    height: 1px;
    margin: 2px 0 3px;
    background: #858585;
}
.more {
    position: relative;
}
.more::after {
    content: "";
    position: absolute;
    right: 0;
    bottom: 0;
    width: 8px;
    height: 8px;
    background: #000;
    clip-path: polygon(100% 0, 100% 100%, 0 100%);
}
.unit {
    font: 500 12px "Noto Sans", sans-serif;
    text-anchor: middle;
    fill: #545454;
}
.glyph {
    font: 11px "Noto Sans", sans-serif;
    fill: #545454;
}
.theta {
    font-style: italic;
}
.canvas {
    flex: 1;
    min-width: 0;
    overflow: hidden;
    background: #001023;
    border: 1px solid #8e8e8e;
    border-bottom: none;
}
.board {
    display: block;
    margin-top: -1px;
}
.sheet rect {
    fill: #b0608f;
}
.silk, .courtyard, .edge, .cursor {
    fill: none;
    stroke-width: 3;
}
.silk {
    stroke: #f2eda1;
}
.courtyard {
    stroke: #ff26e2;
}
.edge {
    stroke: #d0d2cd;
}
.cursor {
    stroke: #8a9096;
}
.tracks {
    fill: none;
    stroke: #c83434;
    stroke-width: 24;
    stroke-linejoin: round;
    stroke-linecap: round;
}
.pads {
    fill: #c83434;
    stroke: #a82e34;
    stroke-width: 2;
}
.pad-text {
    font-family: "Inter", sans-serif;
    font-size: 5px;
    text-anchor: middle;
    fill: #e8a8a8;
}
.pad-text .big {
    font-size: 7px;
}
.ref {
    font-family: "Inter", "Roboto", sans-serif;
    font-weight: 300;
    font-size: 15px;
    text-anchor: middle;
    fill: #f2eda1;
}
.sheet .ref {
    fill: #b0608f;
}

/* Appearance panel */
.panel {
    width: 303px;
    flex: none;
    display: flex;
    flex-direction: column;
    border-left: 4px solid #dadada;
}
.panel h2 {
    margin: 0;
    height: 21px;
    padding-left: 3px;
    line-height: 20px;
    font-size: 11px;
    font-weight: normal;
    background: #bababa;
}
.tabs {
    display: flex;
    align-items: flex-end;
}
.tab {
    height: 19px;
    padding: 0 6px;
    border: 1px solid #e5e5e5;
    border-left: none;
    border-bottom: none;
    background: #f3f3f3;
}
.tab.active {
    height: 21px;
    padding: 0 8px 3px;
    border: none;
    background: #f9f9f9;
}
.panel .tabs {
    margin-top: 4px;
}
.tab-page {
    height: 554px;
    display: flex;
    flex-direction: column;
    padding: 1px 3px 2px 4px;
    margin-right: 1px;
    border: 1px solid #e5e5e5;
    border-left: none;
    background: #f9f9f9;
}
.layer-list {
    flex: 1;
    margin: 0 0 3px;
    padding: 0;
    list-style: none;
    font-family: "Open Sans", sans-serif;
    background: #f0f0f0;
}
.layer-list li {
    height: 20px;
    display: flex;
    align-items: center;
    padding-left: 14px;
}
.layer-list .active {
    padding-left: 8px;
    background: #e1e1e1;
}
.layer-list .active::before {
    content: "";
    width: 3px;
    height: 10px;
    margin-right: 3px;
    background: #3c46ff;
    clip-path: polygon(0 0, 100% 30%, 100% 100%, 0 100%);
}
.swatch {
    width: 20px;
    height: 19px;
}
.swatch.checked {
    background-image: conic-gradient(transparent 25%, rgba(255, 255, 255, 0.15) 0 50%, transparent 0 75%, rgba(255, 255, 255, 0.15) 0);
    background-size: 16px 16px;
}
.layer-list button, .layer-list svg {
    width: 16px;
    height: 16px;
    display: block;
}
.layer-list button {
    margin: 0 3px 0 4px;
}
.display-options {
    height: 19px;
    margin: 0 0 0 3px;
    padding: 0 0 3px 5px;
    display: flex;
    align-items: center;
    gap: 1px;
    color: #6d6d6d;
    background: #fff;
}
.display-options svg {
    width: 6px;
    height: 8px;
}
.presets {
    flex: 1;
    min-height: 0;
    padding: 7px 4px 0;
    border-bottom: 4px solid #dadada;
}
.presets label {
    display: block;
    height: 17px;
    line-height: 17px;
}
.filter {
    display: grid;
    grid-template-columns: 88px auto;
    padding: 3px;
    height: 96px;
    font-family: "Open Sans", sans-serif;
}
.filter label {
    height: 15px;
}
label {
    display: flex;
    align-items: center;
    white-space: nowrap;
}
input[type="checkbox"] {
    appearance: none;
    width: 13px;
    height: 13px;
    margin-right: 3px;
    border: 1px solid #626262;
    border-radius: 3px;
    background: #f6f6f6;
    display: grid;
    place-items: center;
    flex: none;
}
input[type="checkbox"]:checked {
    border-color: #005fb8;
    background: #005fb8;
}
input[type="checkbox"]:checked::after {
    content: "";
    width: 7px;
    height: 4px;
    margin-bottom: 2px;
    border-left: 1px solid #fff;
    border-bottom: 1px solid #fff;
    transform: rotate(-45deg);
}

/* Bottom rows */
.board-info {
    height: 50px;
    margin: 0;
    padding: 9px 11px 0;
    display: flex;
    color: #6d6d6d;
    border-top: 1px solid #d5d5d5;
}
.board-info dt {
    height: 25px;
}
.board-info dd {
    margin: 0;
}
.w-pads {
    width: 54px;
}
.w-vias {
    width: 50px;
}
.w-tracks {
    width: 113px;
}
.w-nets {
    width: 53px;
}
.status {
    height: 24px;
    display: flex;
    align-items: center;
    border-top: 1px solid #d5d5d5;
    border-bottom: 1px solid #b8b0b8;
}
.status span {
    height: 20px;
    padding-left: 4px;
    line-height: 20px;
    white-space: nowrap;
    border-left: 1px solid #d5d5d5;
}
.status .message {
    flex: 1;
    padding-left: 2px;
    border-left: none;
}
.s-zoom {
    width: 78px;
}
.s-pos {
    width: 160px;
}
.s-delta {
    width: 250px;
}
.s-grid {
    width: 184px;
}
.s-unit {
    width: 65px;
}
.s-tool {
    width: 173px;
}
.s-rest {
    width: 158px;
}

/* Design Rules Checker window */
.dialog {
    position: absolute;
    left: 93px;
    top: 99px;
    width: 660px;
    border-radius: 8px;
    background: #f0f0f0;
    box-shadow: 0 0 0 1px rgba(90, 90, 90, 0.5), 0 8px 30px rgba(0, 0, 0, 0.35);
}
.dialog-title {
    height: 30px;
    display: flex;
    align-items: center;
    justify-content: space-between;
    padding: 0 9px 0 8px;
    border-radius: 8px 8px 0 0;
    background: linear-gradient(90deg, #f3eff9, #f9edf5 40%);
}
.dialog-title svg {
    stroke: #111;
}
.dialog-body {
    padding: 10px 11px 6px 10px;
}
.options {
    display: grid;
    grid-template-columns: 328px auto;
    grid-auto-rows: 20px;
    padding-left: 3px;
    margin-bottom: 17px;
}
.dialog .tab {
    padding: 0 7px;
}
.dialog .tab.active {
    padding: 0 9px 3px;
}
.results {
    padding: 6px 7px 14px 8px;
    border: 1px solid #e5e5e5;
    background: #f9f9f9;
}
.results-list {
    height: 302px;
    border: 1px solid #9a9a9f;
    background: #fff;
}
.show-row, .buttons {
    display: flex;
    align-items: center;
    padding-left: 6px;
}
.show-row {
    margin-top: 7px;
    margin-bottom: 11px;
}
.show-label {
    width: 42px;
}
.c-all {
    width: 81px;
}
.c-errors {
    width: 57px;
}
.c-warnings {
    width: 77px;
    margin-left: 31px;
}
.c-exclusions {
    margin-left: 31px;
}
.badge {
    width: 18px;
    height: 18px;
    border-radius: 50%;
    line-height: 18px;
    text-align: center;
    font-weight: bold;
    color: #fff;
    background: #008a00;
}
.btn {
    width: 74px;
    height: 22px;
    border: 1px solid #d0d0d0;
    border-bottom-color: #b8b8b8;
    border-radius: 4px;
    background: #fdfdfd;
}
.show-row .btn {
    margin-left: auto;
    margin-right: 4px;
}
.buttons {
    gap: 11px;
}
.btn.wide {
    width: 93px;
}
.btn.wider {
    width: 115px;
}
.btn.run {
    margin-left: auto;
}
.btn.default {
    margin-right: -2px;
    border-color: #0078d4;
}
.grip {
    position: absolute;
    right: 2px;
    bottom: 2px;
    width: 8px;
    height: 8px;
}
```
